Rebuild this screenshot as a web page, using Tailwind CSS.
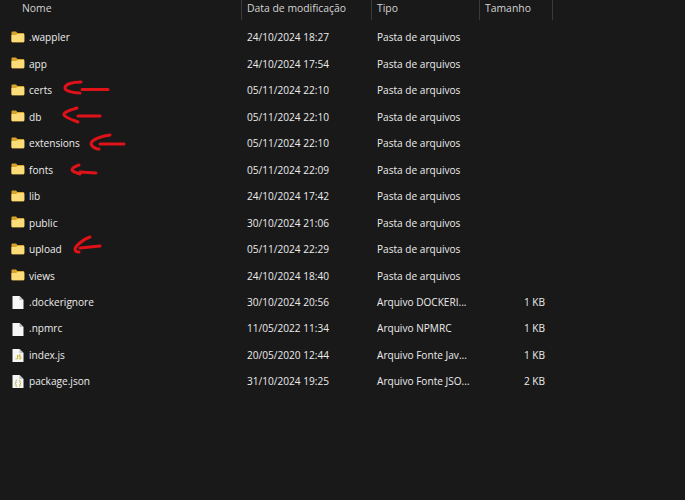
<!DOCTYPE html>
<html lang="pt-BR">
<head>
  <meta charset="UTF-8" />
  <title>Arquivos</title>
  <script src="https://cdn.jsdelivr.net/npm/@tailwindcss/browser@4"></script>
</head>
<body class="bg-[#191919] font-['Open_Sans',sans-serif] text-[10.1px] text-[#ececec]">
  <div class="relative h-[500px] w-[685px] overflow-hidden">
    <!-- cabecalho das colunas -->
    <div class="grid h-[20px] grid-cols-[241px_130px_108px_74px] text-[10.4px] leading-[16px] text-[#d4d4d4]">
      <div class="pl-[22px]">Nome</div>
      <div class="border-l border-[#3a3a3a] pl-[5px]">Data de modificação</div>
      <div class="border-l border-[#3a3a3a] pl-[5px]">Tipo</div>
      <div class="border-x border-[#3a3a3a] pl-[5px]">Tamanho</div>
    </div>
    <div id="linhas" class="mt-[4.800px]"></div>

    <!-- setas vermelhas desenhadas por cima -->
    <svg class="absolute top-0 left-0" width="685" height="500" fill="none" stroke="#df1219" stroke-width="3" stroke-linecap="round" stroke-linejoin="round">
      <path d="M81 82C73 82 65 84 65 88C65 91 73 93 80 93M82 89.500L108 89.500" />
      <path d="M77 108C71 110 63 112 64 115C66 118 73 120 78 122M78 116L100 116" />
      <path d="M110 135C101 136 91 140 91 144C92 147 96 149 99 149M100 144L124 144" />
      <path d="M79 165C76 166 72 168 72 170C73 172 77 173 80 174M80 172L96 173" />
      <path d="M90 237C84 239 76 245 75 249C75 251 77 252 79 252M80 248L100 246" />
    </svg>
  </div>

  <script>
    const pasta = `<svg width="14" height="12" viewBox="0 0 14 12" class="shrink-0 -translate-y-px">
      <path d="M.500 1.500C.500 .800 1 .500 1.500 .500H5L6.500 2H12C12.800 2 13.300 2.500 13.300 3.300V10C13.300 10.800 12.800 11.300 12 11.300H1.800C1 11.300 .500 10.800 .500 10Z" fill="#d8a32b"/>
      <path d="M.500 4L5 4L6.500 3H12C12.800 3 13.300 3.500 13.300 4.300V10C13.300 10.800 12.800 11.300 12 11.300H1.800C1 11.300 .500 10.800 .500 10Z" fill="#fcdc78"/>
    </svg>`;
    const folha = (extra) => `<svg width="14" height="15" viewBox="0 0 14 15" class="shrink-0">
      <path d="M1.500 1H8.500L12.500 5V14H1.500Z" fill="#f6f6f6"/>
      <path d="M8.500 1V5H12.500Z" fill="#bdbdbd"/>
      ${extra}
    </svg>`;
    const iconeJs = `<path d="M6.500 7V10.800H4.500M10.200 7H8V8.900H10V10.800H7.800" fill="none" stroke="#c4b83c" stroke-width="1"/>`;
    const iconeJson = `<path d="M6 6C4.500 6 5 8 5 8.500S4.500 9.500 4 9.500C4.500 9.500 5 10 5 10.500S4.500 13 6 13M8 6C9.500 6 9 8 9 8.500S9.500 9.500 10 9.500C9.500 9.500 9 10 9 10.500S9.500 13 8 13" fill="none" stroke="#b5a93a" stroke-width=".9"/>`;

    const linhas = [
      [".wappler", "24/10/2024 18:27", "Pasta de arquivos", "", pasta],
      ["app", "24/10/2024 17:54", "Pasta de arquivos", "", pasta],
      ["certs", "05/11/2024 22:10", "Pasta de arquivos", "", pasta],
      ["db", "05/11/2024 22:10", "Pasta de arquivos", "", pasta],
      ["extensions", "05/11/2024 22:10", "Pasta de arquivos", "", pasta],
      ["fonts", "05/11/2024 22:09", "Pasta de arquivos", "", pasta],
      ["lib", "24/10/2024 17:42", "Pasta de arquivos", "", pasta],
      ["public", "30/10/2024 21:06", "Pasta de arquivos", "", pasta],
      ["upload", "05/11/2024 22:29", "Pasta de arquivos", "", pasta],
      ["views", "24/10/2024 18:40", "Pasta de arquivos", "", pasta],
      [".dockerignore", "30/10/2024 20:56", "Arquivo DOCKERI...", "1 KB", folha("")],
      [".npmrc", "11/05/2022 11:34", "Arquivo NPMRC", "1 KB", folha("")],
      ["index.js", "20/05/2020 12:44", "Arquivo Fonte Jav...", "1 KB", folha(iconeJs)],
      ["package.json", "31/10/2024 19:25", "Arquivo Fonte JSO...", "2 KB", folha(iconeJson)],
    ];

    document.getElementById("linhas").innerHTML = linhas.map(([nome, data, tipo, tam, icone]) => `
      <div class="grid h-[26.46px] grid-cols-[241px_130px_108px_66px] items-center">
        <div class="flex items-center gap-[4px] pl-[11px]">${icone}<span>${nome}</span></div>
        <div class="pl-[6px]">${data}</div>
        <div class="pl-[6px]">${tipo}</div>
        <div class="text-right">${tam}</div>
      </div>`).join("");
  </script>
</body>
</html>
